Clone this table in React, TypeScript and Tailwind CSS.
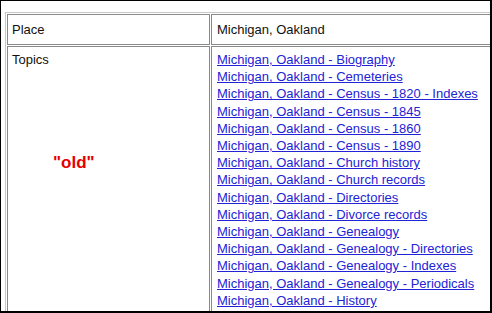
import React from "react";

const topics = [
  "Michigan, Oakland - Biography",
  "Michigan, Oakland - Cemeteries",
  "Michigan, Oakland - Census - 1820 - Indexes",
  "Michigan, Oakland - Census - 1845",
  "Michigan, Oakland - Census - 1860",
  "Michigan, Oakland - Census - 1890",
  "Michigan, Oakland - Church history",
  "Michigan, Oakland - Church records",
  "Michigan, Oakland - Directories",
  "Michigan, Oakland - Divorce records",
  "Michigan, Oakland - Genealogy",
  "Michigan, Oakland - Genealogy - Directories",
  "Michigan, Oakland - Genealogy - Indexes",
  "Michigan, Oakland - Genealogy - Periodicals",
  "Michigan, Oakland - History",
];

export default function App() {
  return (
    <div
      className="relative w-[492px] h-[313px] overflow-hidden bg-white border-l border-t border-r-2 border-b-2 border-black pl-[4px] pt-[11px] text-[13px] text-[#111]"
      style={{ fontFamily: '"Liberation Sans", Arial, sans-serif' }}
    >
      <div className="w-[600px] border border-[#c8c8c8] p-[1px] flex flex-col gap-[1px]">
        <div className="flex gap-[1px]">
          <div className="w-[203px] shrink-0 border border-[#8a8a8a] pl-[4px] pt-[7px] pb-[7px] leading-[15px]">
            Place
          </div>
          <div className="w-[380px] shrink-0 border border-[#8a8a8a] pl-[5px] pt-[7px] pb-[7px] leading-[15px]">
            Michigan, Oakland
          </div>
        </div>
        <div className="flex gap-[1px]">
          <div className="w-[203px] shrink-0 border border-[#8a8a8a] pl-[4px] pt-[4px] leading-[17.2px]">
            Topics
          </div>
          <div className="w-[380px] shrink-0 border border-[#8a8a8a] pl-[5px] pt-[4px] pb-[20px] leading-[17.2px] flex flex-col">
            {topics.map((t) => (
              <a key={t} href="#" className="text-[#2323d6] underline self-start">
                {t}
              </a>
            ))}
          </div>
        </div>
      </div>
      <div className="absolute left-[52px] top-[152px] text-[17px] font-bold text-[#e60000] leading-[20px]">
        "old"
      </div>
    </div>
  );
}
